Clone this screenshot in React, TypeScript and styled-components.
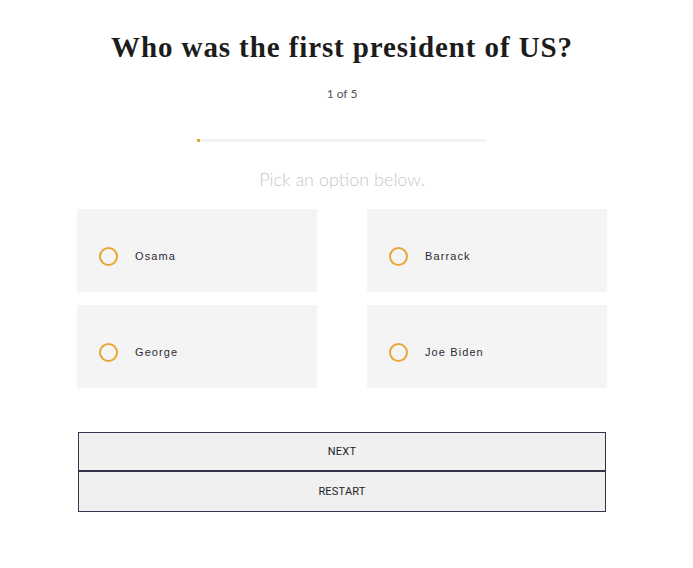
import React from "react";
import styled, { createGlobalStyle } from "styled-components";

const Global = createGlobalStyle`
  html, body { margin: 0; padding: 0; background: #ffffff; }
  body { font-family: "Roboto", "Liberation Sans", sans-serif; }
`;

const Page = styled.div`
  width: 684px;
  display: flex;
  flex-direction: column;
  align-items: center;
  padding-top: 30px;
`;

const Title = styled.h1`
  margin: 0;
  font-family: "Liberation Serif", "DejaVu Serif", serif;
  font-weight: 700;
  font-size: 29px;
  line-height: 34px;
  letter-spacing: 0.9px;
  color: #1c1c1c;
`;

const Counter = styled.div`
  margin-top: 23px;
  font-family: "Lato", "Open Sans", sans-serif;
  font-size: 12px;
  line-height: 14px;
  color: #555;
`;

const Track = styled.div`
  margin-top: 38px;
  width: 290px;
  height: 3px;
  background: #f3f3f3;
  display: flex;
`;

const Fill = styled.div`
  height: 100%;
  background: #e2a53a;
`;

const Hint = styled.div`
  margin-top: 26px;
  font-family: "Lato", "Open Sans", sans-serif;
  font-weight: 300;
  font-size: 18px;
  line-height: 22px;
  color: #c8c8c8;
`;

const Grid = styled.div`
  margin-top: 19px;
  width: 530px;
  display: grid;
  grid-template-columns: 240px 240px;
  column-gap: 50px;
  row-gap: 13px;
`;

const Option = styled.div`
  height: 83px;
  background: #f4f4f4;
  display: flex;
  align-items: center;
  padding-left: 22px;
  padding-top: 11px;
  box-sizing: border-box;
  gap: 17px;
`;

const Radio = styled.span`
  width: 15px;
  height: 15px;
  border-radius: 50%;
  border: 2px solid #e8a838;
  flex: none;
`;

const Label = styled.span`
  font-family: "Liberation Sans", "Roboto", sans-serif;
  font-size: 11px;
  letter-spacing: 1.1px;
  color: #2a2a35;
`;

const Buttons = styled.div`
  margin-top: 44px;
  width: 528px;
  display: flex;
  flex-direction: column;
`;

const Button = styled.button<{ $first?: boolean }>`
  height: ${(p) => (p.$first ? "40px" : "41px")};
  background: #f0f0f0;
  border: 1px solid #33334a;
  margin-top: ${(p) => (p.$first ? "0" : "-1px")};
  border-bottom-width: ${(p) => (p.$first ? "2px" : "1px")};
  font-family: "Roboto", "Liberation Sans", sans-serif;
  font-size: 11px;
  font-weight: 400;
  color: #1e1e1e;
  letter-spacing: 0.2px;
  padding: 0;
  cursor: pointer;
`;

const options = ["Osama", "Barrack", "George", "Joe Biden"];

export default function App() {
  const progress = 1;
  return (
    <>
      <Global />
      <Page>
        <Title>Who was the first president of US?</Title>
        <Counter>1 of 5</Counter>
        <Track>
          <Fill style={{ width: `${progress}%` }} />
        </Track>
        <Hint>Pick an option below.</Hint>
        <Grid>
          {options.map((o) => (
            <Option key={o}>
              <Radio />
              <Label>{o}</Label>
            </Option>
          ))}
        </Grid>
        <Buttons>
          <Button $first>NEXT</Button>
          <Button>RESTART</Button>
        </Buttons>
      </Page>
    </>
  );
}
